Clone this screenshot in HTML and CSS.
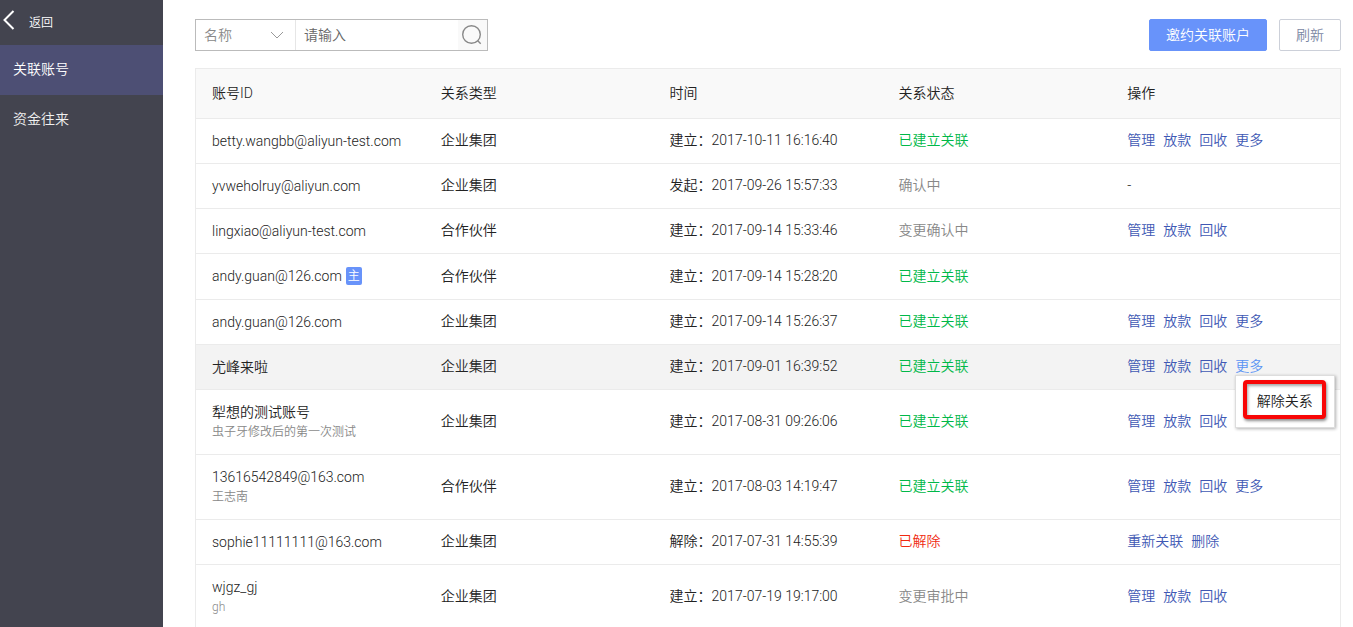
FILE: index.html
```html
<!DOCTYPE html>
<html lang="zh-CN">
<head>
<meta charset="utf-8">
<title>关联账号</title>
<link rel="stylesheet" href="styles.css">
</head>
<body>
<div class="layout">
  <nav class="sidebar">
    <a class="back" href="#">
      <svg class="back-icon" viewBox="0 0 12 20" aria-hidden="true"><path d="M10.5 1 1.5 10l9 9"/></svg>
      <span>返回</span>
    </a>
    <a class="nav-item active" href="#">关联账号</a>
    <a class="nav-item" href="#">资金往来</a>
  </nav>
  <main class="main">
    <div class="toolbar">
      <form class="search">
        <div class="select-wrap">
          <select class="search-type" aria-label="搜索类型"><option>名称</option></select>
          <svg class="select-arrow" viewBox="0 0 14 8" aria-hidden="true"><path d="M1 1l6 6 6-6"/></svg>
        </div>
        <input class="search-input" type="text" placeholder="请输入" aria-label="搜索内容">
        <button class="search-btn" type="button" aria-label="搜索">
          <svg class="search-icon" viewBox="0 0 22 22" aria-hidden="true"><circle cx="10.5" cy="10.5" r="8.8"/><path d="M16.8 16.8l2.9 2.9"/></svg>
        </button>
      </form>
      <div class="actions">
        <button class="btn btn-primary" type="button">邀约关联账户</button>
        <button class="btn" type="button">刷新</button>
      </div>
    </div>
    <table class="accounts">
      <thead>
        <tr><th>账号ID</th><th>关系类型</th><th>时间</th><th>关系状态</th><th>操作</th></tr>
      </thead>
      <tbody>
        <tr>
          <td class="account">betty.wangbb@aliyun-test.com</td><td>企业集团</td><td>建立：2017-10-11 16:16:40</td><td class="ok">已建立关联</td>
          <td><div class="ops"><a href="#">管理</a><a href="#">放款</a><a href="#">回收</a><a href="#">更多</a></div></td>
        </tr>
        <tr>
          <td class="account">yvweholruy@aliyun.com</td><td>企业集团</td><td>发起：2017-09-26 15:57:33</td><td class="pending">确认中</td>
          <td>-</td>
        </tr>
        <tr>
          <td class="account">lingxiao@aliyun-test.com</td><td>合作伙伴</td><td>建立：2017-09-14 15:33:46</td><td class="pending">变更确认中</td>
          <td><div class="ops"><a href="#">管理</a><a href="#">放款</a><a href="#">回收</a></div></td>
        </tr>
        <tr class="main-account">
          <td><div class="tagged">andy.guan@126.com<span class="tag">主</span></div></td><td>合作伙伴</td><td>建立：2017-09-14 15:28:20</td><td class="ok">已建立关联</td>
          <td></td>
        </tr>
        <tr>
          <td class="account">andy.guan@126.com</td><td>企业集团</td><td>建立：2017-09-14 15:26:37</td><td class="ok">已建立关联</td>
          <td><div class="ops"><a href="#">管理</a><a href="#">放款</a><a href="#">回收</a><a href="#">更多</a></div></td>
        </tr>
        <tr class="hovered">
          <td class="account">尤峰来啦</td><td>企业集团</td><td>建立：2017-09-01 16:39:52</td><td class="ok">已建立关联</td>
          <td><div class="ops"><a href="#">管理</a><a href="#">放款</a><a href="#">回收</a><div class="more"><a class="open" href="#">更多</a><div class="menu"><button class="menu-item" type="button">解除关系</button></div></div></div></td>
        </tr>
        <tr>
          <td class="account">犁想的测试账号<div class="note">虫子牙修改后的第一次测试</div></td><td>企业集团</td><td>建立：2017-08-31 09:26:06</td><td class="ok">已建立关联</td>
          <td><div class="ops"><a href="#">管理</a><a href="#">放款</a><a href="#">回收</a></div></td>
        </tr>
        <tr>
          <td class="account">13616542849@163.com<div class="note">王志南</div></td><td>合作伙伴</td><td>建立：2017-08-03 14:19:47</td><td class="ok">已建立关联</td>
          <td><div class="ops"><a href="#">管理</a><a href="#">放款</a><a href="#">回收</a><a href="#">更多</a></div></td>
        </tr>
        <tr>
          <td class="account">sophie11111111@163.com</td><td>企业集团</td><td>解除：2017-07-31 14:55:39</td><td class="removed">已解除</td>
          <td><div class="ops"><a href="#">重新关联</a><a href="#">删除</a></div></td>
        </tr>
        <tr>
          <td class="account">wjgz_gj<div class="note">gh</div></td><td>企业集团</td><td>建立：2017-07-19 19:17:00</td><td class="pending">变更审批中</td>
          <td><div class="ops"><a href="#">管理</a><a href="#">放款</a><a href="#">回收</a></div></td>
        </tr>
      </tbody>
    </table>
  </main>
</div>
</body>
</html>
```
FILE: styles.css
```css
* { box-sizing: border-box; }
body {
  margin: 0;
  font: 350 14px/20px Roboto, "Noto Sans CJK SC", sans-serif;
  color: #222;
  background: #fff;
}
a { text-decoration: none; }
button, input, select { font: inherit; margin: 0; }
svg { fill: none; stroke: currentColor; display: block; }

.layout { display: flex; height: 100vh; }
.sidebar { flex: none; width: 163px; background: #43444f; }
.back {
  display: flex;
  align-items: center;
  gap: 14px;
  height: 45px;
  padding: 0 3px 5px;
  color: #fff;
  font-size: 12px;
}
.back span { padding-top: 6px; }
.back-icon { width: 12px; height: 20px; stroke: #fff; stroke-width: 2; }
.nav-item {
  display: block;
  padding: 14px 13px 16px;
  color: #f0f0f0;
}
.nav-item.active { background: #4d4f74; color: #fff; }

.main {
  flex: 1;
  min-width: 0;
  padding: 19px 12px 0 32px;
  overflow-y: auto;
  scrollbar-width: none;
}
.toolbar {
  display: flex;
  justify-content: space-between;
  margin-bottom: 17px;
}
.search {
  display: flex;
  width: 293px;
  height: 32px;
  border: 1px solid #bbb;
}
.select-wrap {
  display: grid;
  width: 100px;
  align-items: center;
  border-right: 1px solid #e6e6e6;
}
.search-type, .select-arrow { grid-area: 1 / 1; }
.search-type {
  appearance: none;
  width: 100%;
  height: 30px;
  padding: 0 8px;
  border: 0;
  background: none;
  color: #888;
}
.select-arrow {
  justify-self: end;
  width: 14px;
  height: 8px;
  margin-right: 11px;
  color: #999;
  pointer-events: none;
}
.search-input {
  flex: 1;
  min-width: 0;
  padding: 0 8px;
  border: 0;
  background: none;
}
.search-input::placeholder { color: #666; }
.search-btn {
  width: 29px;
  padding: 0 3px;
  border: 0;
  background: #f9f9f9;
  color: #888;
}
.search-icon { width: 22px; height: 22px; stroke-width: 1.4; }
.actions { display: flex; gap: 12px; }
.btn {
  height: 32px;
  padding: 0 16px;
  border: 1px solid #ccd0d9;
  border-radius: 2px;
  background: #fff;
  color: #7a86a3;
}
.btn-primary { background: #6893fa; border-color: #6893fa; color: #fff; }

.accounts {
  width: 100%;
  table-layout: fixed;
  border: 1px solid #ebebeb;
  border-spacing: 0;
}
.accounts th, .accounts td {
  padding: 11px 0 13px 16px;
  border-bottom: 1px solid #ebebeb;
  text-align: left;
  vertical-align: middle;
}
.accounts th {
  padding: 14px 0 15px 16px;
  background: #f9f9f9;
  font-weight: inherit;
}
.accounts .account { padding-top: 12px; padding-bottom: 12px; }
.main-account td { padding-top: 12px; }
.hovered td { background: #f3f3f3; }
.tagged { display: flex; align-items: center; gap: 4px; }
.tag {
  width: 16px;
  border-radius: 2px;
  background: #6893fa;
  color: #fff;
  font-size: 12px;
  line-height: 18px;
  text-align: center;
}
.note { color: #888; font-size: 12px; }
.accounts .ok { color: #00b848; }
.accounts .pending { color: #888; }
.accounts .removed { color: #f02a10; }
.ops { display: flex; gap: 8px; }
.ops a { color: #4058b4; }
.ops .open { color: #5a94f4; }

.more { position: relative; }
.menu {
  position: absolute;
  z-index: 1;
  top: 19px;
  left: 0;
  width: 100px;
  padding: 4px 8px 8px 7px;
  border: 1px solid #ddd;
  background: #fff;
  box-shadow: 1px 1px 3px rgba(0, 0, 0, .3);
}
.menu-item {
  display: block;
  width: 100%;
  height: 39px;
  padding: 2px 0 0;
  border: 4px solid #f80606;
  border-radius: 4px;
  background: #fff;
  box-shadow: 1px 2px 3px rgba(0, 0, 0, .45), inset 1px 2px 3px rgba(0, 0, 0, .35);
  color: #222;
  white-space: nowrap;
}
```
